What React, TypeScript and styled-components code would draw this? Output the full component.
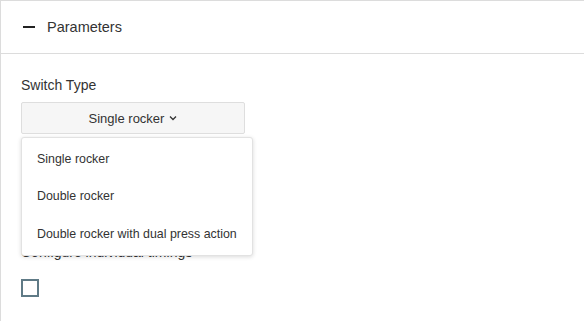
import React from "react";
import styled, { createGlobalStyle } from "styled-components";

const Global = createGlobalStyle`
  html, body { margin: 0; padding: 0; background: #fff; }
  body { font-family: "Liberation Sans", Arial, sans-serif; color: #333; }
`;

const Card = styled.div`
  width: 584px;
  height: 321px;
  box-sizing: border-box;
  border-left: 1px solid #dcdcdc;
  border-top: 1px solid #dcdcdc;
  background: #fff;
  overflow: hidden;
`;

const Header = styled.div`
  display: flex;
  align-items: center;
  height: 52px;
  padding-left: 22px;
  gap: 12px;
  border-bottom: 1px solid #dcdcdc;
`;

const Minus = styled.span`
  display: block;
  width: 12px;
  height: 2px;
  background: #222;
`;

const Title = styled.span`
  font-size: 14.5px;
  color: #333;
`;

const Body = styled.div`
  padding: 21px 20px 0 20px;
  display: flex;
  flex-direction: column;
  align-items: flex-start;
`;

const Label = styled.div<{ $gap: number }>`
  font-size: 14px;
  line-height: 20px;
  color: #333;
  margin-bottom: ${(p) => p.$gap}px;
`;

const SelectWrap = styled.div`
  position: relative;
  margin-bottom: 108px;
`;

const SelectButton = styled.div`
  box-sizing: border-box;
  width: 224px;
  height: 32px;
  border: 1px solid #dedede;
  border-radius: 2px;
  background: #f6f6f6;
  display: flex;
  align-items: center;
  justify-content: center;
  gap: 5px;
  font-size: 13px;
  color: #333;
`;

const Menu = styled.div`
  position: absolute;
  top: 35px;
  left: 0;
  width: 232px;
  box-sizing: border-box;
  padding: 2px 0;
  background: #fff;
  border: 1px solid #e2e2e2;
  border-radius: 3px;
  box-shadow: 0 1px 4px rgba(0, 0, 0, 0.15);
  z-index: 2;
`;

const MenuItem = styled.div`
  height: 37.5px;
  display: flex;
  align-items: center;
  padding-left: 15px;
  font-size: 12.4px;
  color: #333;
  white-space: nowrap;
`;

const Checkbox = styled.div`
  box-sizing: border-box;
  width: 18px;
  height: 18px;
  border: 2px solid #5f7a86;
  background: #fff;
`;

const Chevron = () => (
  <svg width="8" height="6" viewBox="0 0 8 6" fill="none">
    <path d="M1 1.5 L4 4.5 L7 1.5" stroke="#333" strokeWidth="1.3" />
  </svg>
);

export default function App() {
  const options = ["Single rocker", "Double rocker", "Double rocker with dual press action"];
  return (
    <>
      <Global />
      <Card>
        <Header>
          <Minus />
          <Title>Parameters</Title>
        </Header>
        <Body>
          <Label $gap={7}>Switch Type</Label>
          <SelectWrap>
            <SelectButton>
              Single rocker
              <Chevron />
            </SelectButton>
            <Menu>
              {options.map((o) => (
                <MenuItem key={o}>{o}</MenuItem>
              ))}
            </Menu>
          </SelectWrap>
          <Label $gap={17}>Configure individual timings</Label>
          <Checkbox />
        </Body>
      </Card>
    </>
  );
}
